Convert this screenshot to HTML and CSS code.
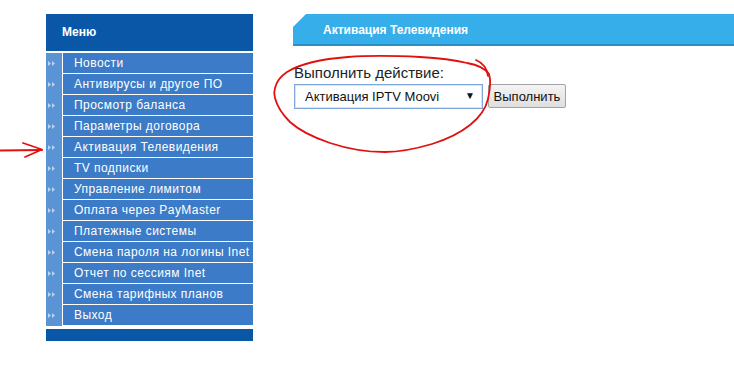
FILE: index.html
```html
<!DOCTYPE html>
<html lang="ru">
<head>
<meta charset="utf-8">
<title>Активация Телевидения</title>
<link rel="stylesheet" href="styles.css">
</head>
<body>
<div class="page">
  <nav class="menu">
    <div class="menu-head">Меню</div>
    <ul class="menu-list">
      <li><span class="ico"><svg width="8" height="5" viewBox="0 0 8 5"><path d="M0 0L3 2.5L0 5Z M4 0L7 2.5L4 5Z" fill="#b9d2ef"/></svg></span><a class="item">Новости</a></li>
      <li><span class="ico"><svg width="8" height="5" viewBox="0 0 8 5"><path d="M0 0L3 2.5L0 5Z M4 0L7 2.5L4 5Z" fill="#b9d2ef"/></svg></span><a class="item">Антивирусы и другое ПО</a></li>
      <li><span class="ico"><svg width="8" height="5" viewBox="0 0 8 5"><path d="M0 0L3 2.5L0 5Z M4 0L7 2.5L4 5Z" fill="#b9d2ef"/></svg></span><a class="item">Просмотр баланса</a></li>
      <li><span class="ico"><svg width="8" height="5" viewBox="0 0 8 5"><path d="M0 0L3 2.5L0 5Z M4 0L7 2.5L4 5Z" fill="#b9d2ef"/></svg></span><a class="item">Параметры договора</a></li>
      <li><span class="ico"><svg width="8" height="5" viewBox="0 0 8 5"><path d="M0 0L3 2.5L0 5Z M4 0L7 2.5L4 5Z" fill="#b9d2ef"/></svg></span><a class="item">Активация Телевидения</a></li>
      <li><span class="ico"><svg width="8" height="5" viewBox="0 0 8 5"><path d="M0 0L3 2.5L0 5Z M4 0L7 2.5L4 5Z" fill="#b9d2ef"/></svg></span><a class="item">TV подписки</a></li>
      <li><span class="ico"><svg width="8" height="5" viewBox="0 0 8 5"><path d="M0 0L3 2.5L0 5Z M4 0L7 2.5L4 5Z" fill="#b9d2ef"/></svg></span><a class="item">Управление лимитом</a></li>
      <li><span class="ico"><svg width="8" height="5" viewBox="0 0 8 5"><path d="M0 0L3 2.5L0 5Z M4 0L7 2.5L4 5Z" fill="#b9d2ef"/></svg></span><a class="item">Оплата через PayMaster</a></li>
      <li><span class="ico"><svg width="8" height="5" viewBox="0 0 8 5"><path d="M0 0L3 2.5L0 5Z M4 0L7 2.5L4 5Z" fill="#b9d2ef"/></svg></span><a class="item">Платежные системы</a></li>
      <li><span class="ico"><svg width="8" height="5" viewBox="0 0 8 5"><path d="M0 0L3 2.5L0 5Z M4 0L7 2.5L4 5Z" fill="#b9d2ef"/></svg></span><a class="item">Смена пароля на логины Inet</a></li>
      <li><span class="ico"><svg width="8" height="5" viewBox="0 0 8 5"><path d="M0 0L3 2.5L0 5Z M4 0L7 2.5L4 5Z" fill="#b9d2ef"/></svg></span><a class="item">Отчет по сессиям Inet</a></li>
      <li><span class="ico"><svg width="8" height="5" viewBox="0 0 8 5"><path d="M0 0L3 2.5L0 5Z M4 0L7 2.5L4 5Z" fill="#b9d2ef"/></svg></span><a class="item">Смена тарифных планов</a></li>
      <li><span class="ico"><svg width="8" height="5" viewBox="0 0 8 5"><path d="M0 0L3 2.5L0 5Z M4 0L7 2.5L4 5Z" fill="#b9d2ef"/></svg></span><a class="item">Выход</a></li>
    </ul>
    <div class="menu-foot"></div>
  </nav>
  <main class="content">
    <div class="tab">Активация Телевидения</div>
    <form class="action">
      <label class="action-label" for="act">Выполнить действие:</label>
      <div class="action-row">
        <span class="select-wrap">
          <select id="act" class="select"><option>Активация IPTV Moovi</option></select>
        </span>
        <button type="button" class="btn">Выполнить</button>
      </div>
    </form>
  </main>
</div>
<svg class="scribble" width="734" height="371" viewBox="0 0 734 371">
  <g fill="none" stroke="#e31010" stroke-width="1.8" stroke-linecap="round" stroke-linejoin="round">
    <path d="M0 150.5 L42 150"/>
    <path d="M23 143 L42 149.5 L25 157"/>
    <path d="M275 88 C277 80 281 76 287 72 C300 64 320 59 348 57 C375 55 400 56 420 57 C440 58 455 60 467 63 C478 65 485 68 489 74 C491 80 490 90 488 99 C486 108 480 117 470 125 C460 133 448 139 432 144 C415 149 400 152 385 152 C365 152 345 148 330 143 C315 138 300 131 290 122 C282 114 277 106 275 98 C274 94 274 91 275 88"/>
    <path d="M476 60 C483 63 487 68 488 76"/>
  </g>
</svg>
</body>
</html>
```
FILE: styles.css
```css
html, body {
  margin: 0;
  padding: 0;
  background: #fff;
}

body {
  position: relative;
  font-family: "Liberation Sans", Arial, sans-serif;
  overflow: hidden;
}

.page {
  display: flex;
  align-items: flex-start;
  padding: 14px 0 0 46px;
  gap: 40px;
}

/* ---------- menu ---------- */
.menu {
  width: 207px;
  flex: none;
}

.menu-head {
  height: 37px;
  background: #0b57a7;
  color: #fff;
  font-weight: bold;
  font-size: 12px;
  line-height: 37px;
  padding-left: 16px;
  box-sizing: border-box;
  margin-bottom: 2px;
}

.menu-list {
  list-style: none;
  margin: 0;
  padding: 0;
  background: linear-gradient(to right, #5b94d4 0, #5b94d4 16px, #fff 16px, #fff 17px, transparent 17px);
}

.menu-list li {
  display: flex;
  height: 21px;
}

.ico {
  width: 16px;
  flex: none;
  display: flex;
  align-items: center;
  padding-left: 2px;
  box-sizing: border-box;
}

.ico svg {
  display: block;
}

.item {
  margin-left: 1px;
  flex: 1;
  height: 20px;
  border-bottom: 1px solid #fff;
  background: #3b7bc7;
  color: #fff;
  font-size: 12px;
  line-height: 21px;
  letter-spacing: 0.45px;
  padding-left: 11px;
  white-space: nowrap;
  overflow: hidden;
}

.menu-foot {
  height: 12px;
  margin-top: 3px;
  background: #0b57a7;
}

/* ---------- content ---------- */
.content {
  flex: 1;
  min-width: 0;
  margin-right: -10px;
}

.tab {
  height: 30px;
  background: #35aee9;
  border-bottom: 2px solid #2a90c6;
  clip-path: polygon(0 13px, 13px 0, 100% 0, 100% 100%, 0 100%);
  color: #fff;
  font-weight: bold;
  font-size: 12px;
  line-height: 33px;
  padding-left: 30px;
}

.action {
  margin: 18px 0 0 1px;
}

.action-label {
  display: block;
  font-size: 15px;
  line-height: 18px;
  color: #222;
  margin-bottom: 2px;
}

.action-row {
  display: flex;
  align-items: flex-start;
  gap: 5px;
}

.select-wrap {
  position: relative;
  display: block;
}

.select-wrap::after {
  content: "▼";
  position: absolute;
  right: 8px;
  top: 6px;
  font-size: 10px;
  color: #111;
  pointer-events: none;
}

.select {
  appearance: none;
  -webkit-appearance: none;
  width: 189px;
  height: 25px;
  margin: 0;
  border: 1px solid #7ea7dc;
  border-radius: 0;
  background: #fff;
  box-shadow: inset 0 0 0 1px #d6e4f6;
  font-family: "Liberation Sans", Arial, sans-serif;
  font-size: 13px;
  color: #111;
  padding: 0 0 0 10px;
}

.btn {
  width: 78px;
  height: 24px;
  margin: 0;
  border: 1px solid #a3a3a3;
  border-radius: 2px;
  background: linear-gradient(#f4f4f4, #dedede);
  font-family: "Liberation Sans", Arial, sans-serif;
  font-size: 13px;
  color: #111;
  padding: 0;
}

/* ---------- red annotation ---------- */
.scribble {
  position: absolute;
  left: 0;
  top: 0;
  pointer-events: none;
}
```
